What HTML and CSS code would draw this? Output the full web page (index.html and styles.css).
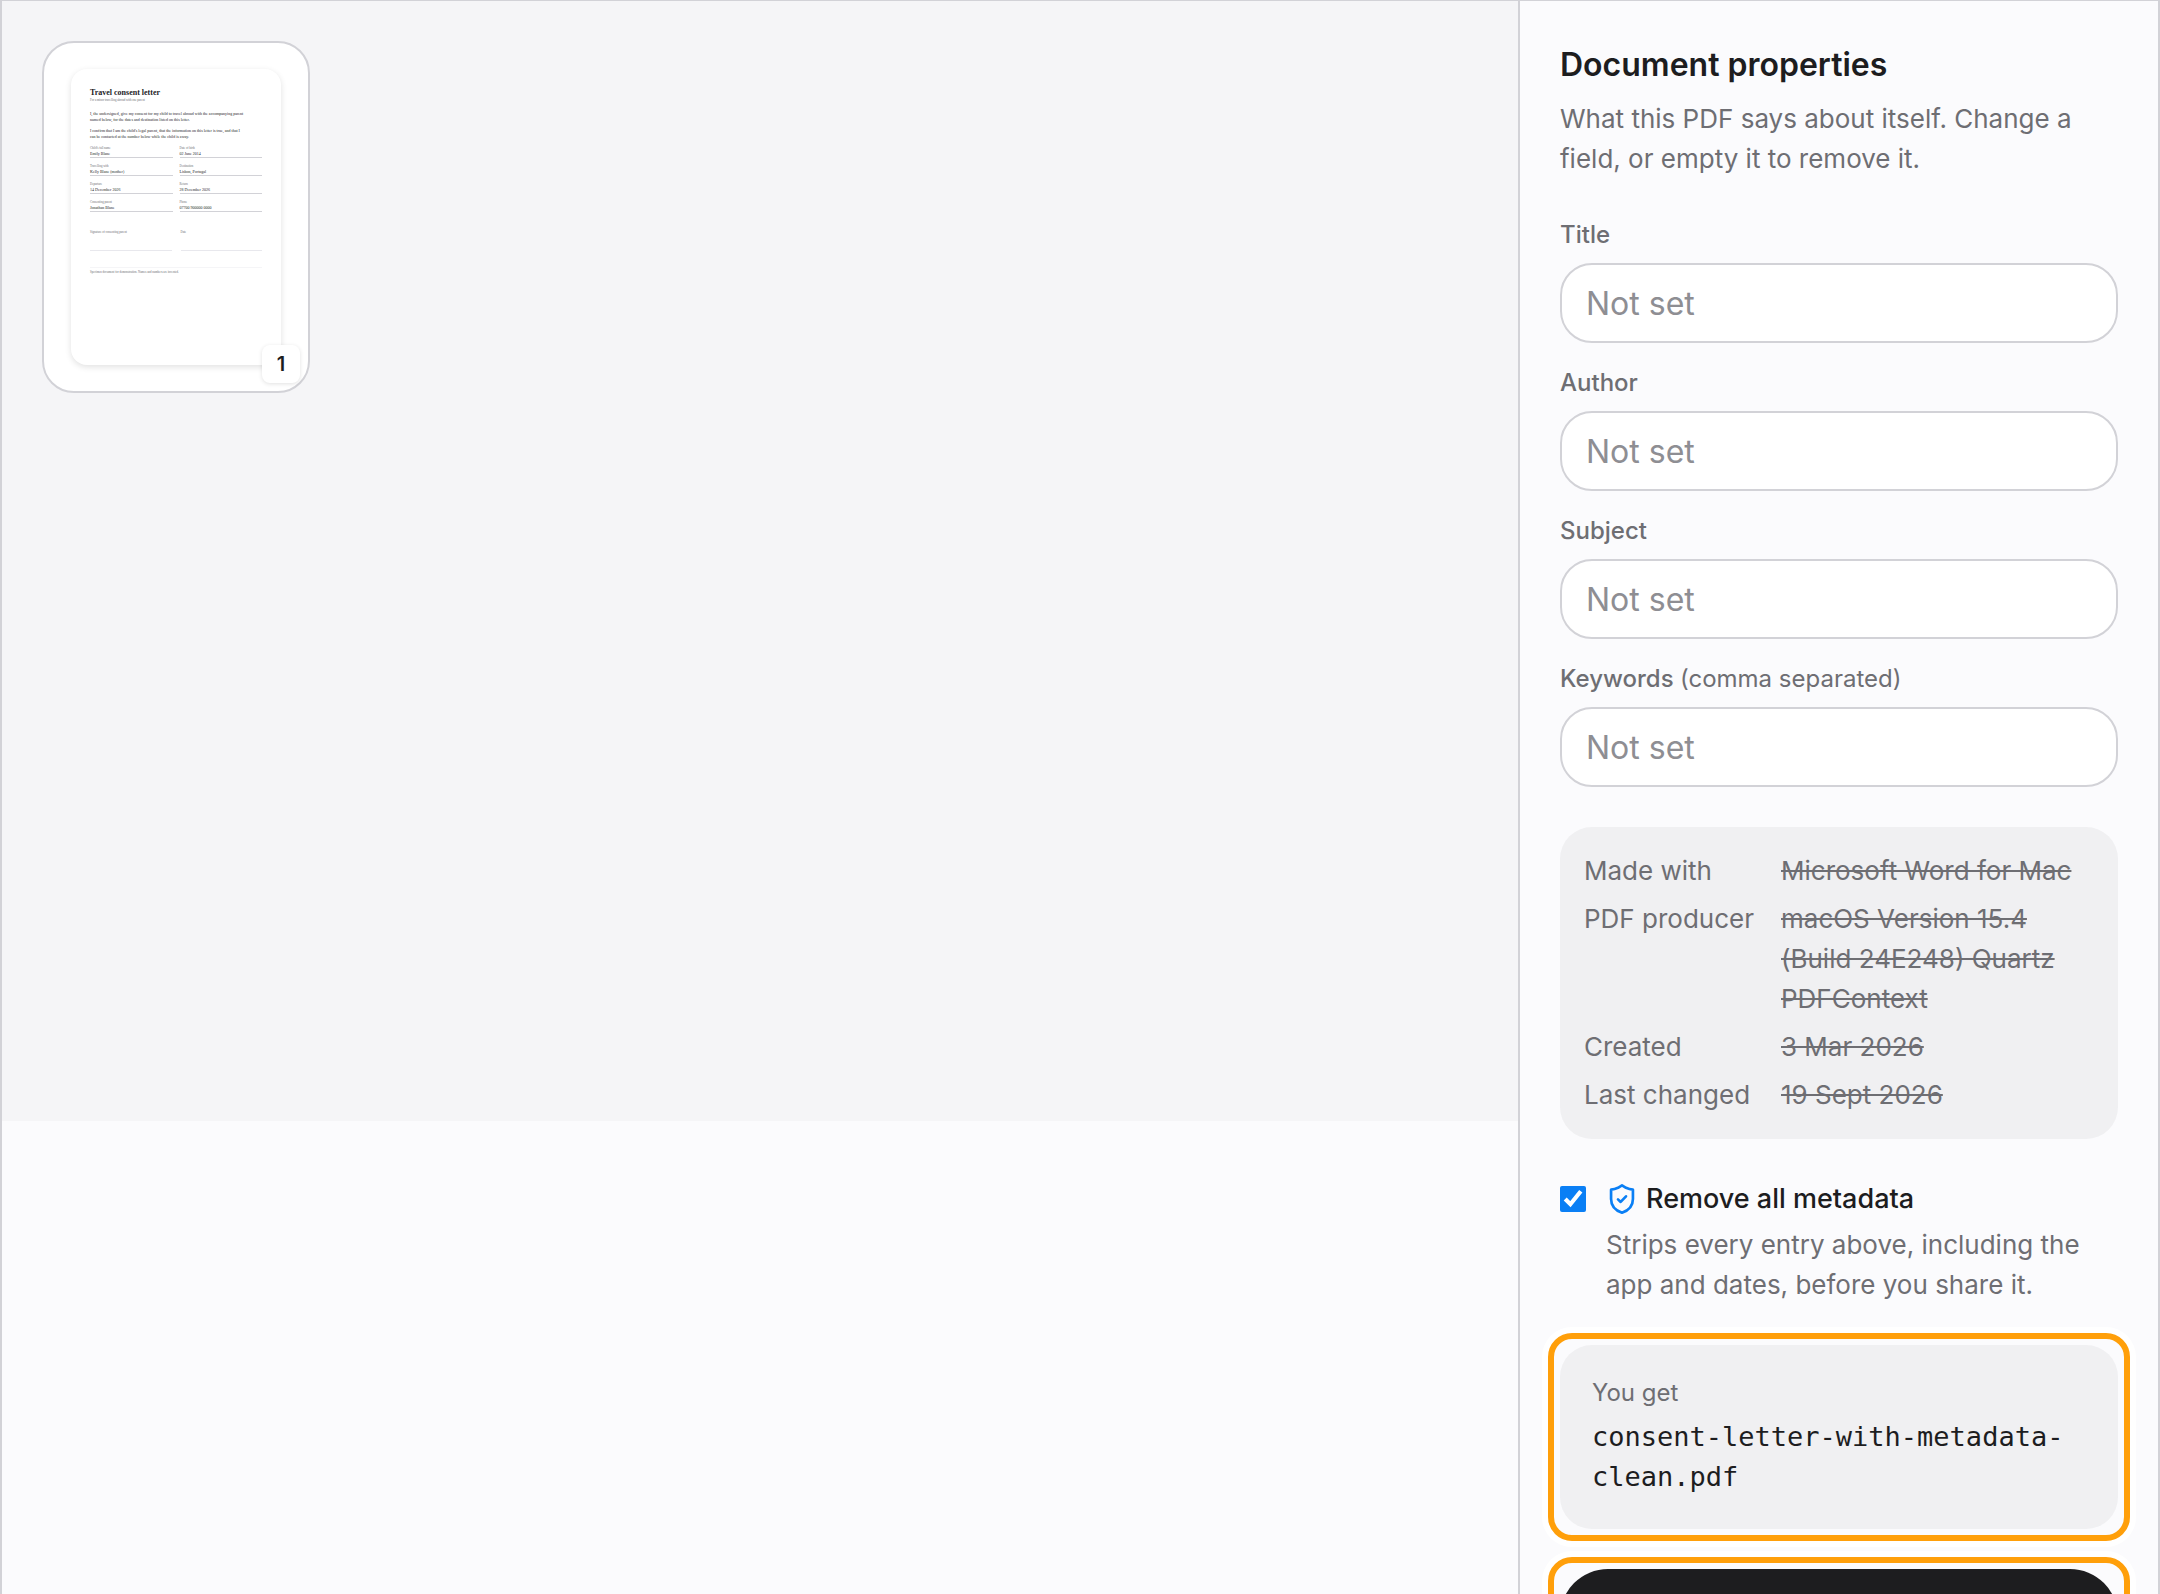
FILE: index.html
```html
<!DOCTYPE html>
<html lang="en">
<head>
    <meta charset="UTF-8">
    <meta name="viewport" content="width=device-width, initial-scale=1.0">
    <title>Document properties</title>
    <link rel="stylesheet" href="styles.css">
</head>
<body>
    <div class="editor">
        <main class="workspace">
            <div class="page-grid">
                <div class="page-card">
                    <div class="page-preview">
                        <h2>Travel consent letter</h2>
                        <p class="lead">For a minor travelling abroad with one parent</p>
                        <p class="letter">I, the undersigned, give my consent for my child to travel abroad with the accompanying parent<br>named below, for the dates and destination listed on this letter.</p>
                        <p class="letter">I confirm that I am the child's legal parent, that the information on this letter is true, and that I<br>can be contacted at the number below while the child is away.</p>
                        <dl class="details">
                            <div><dt>Child's full name</dt><dd>Emily Blane</dd></div>
                            <div><dt>Date of birth</dt><dd>02 June 2014</dd></div>
                            <div><dt>Travelling with</dt><dd>Kelly Blane (mother)</dd></div>
                            <div><dt>Destination</dt><dd>Lisbon, Portugal</dd></div>
                            <div><dt>Departure</dt><dd>14 December 2026</dd></div>
                            <div><dt>Return</dt><dd>28 December 2026</dd></div>
                            <div><dt>Consenting parent</dt><dd>Jonathan Blane</dd></div>
                            <div><dt>Phone</dt><dd>07700 900000 0000</dd></div>
                        </dl>
                        <div class="signature">
                            <span>Signature of consenting parent</span>
                            <span>Date</span>
                        </div>
                        <p class="note">Specimen document for demonstration. Names and numbers are invented.</p>
                    </div>
                    <span class="page-number">1</span>
                </div>
            </div>
        </main>

        <aside class="panel">
            <h1>Document properties</h1>
            <p class="hint">What this PDF says about itself. Change a field, or empty it to remove it.</p>

            <form class="fields">
                <div class="field">
                    <label for="title">Title</label>
                    <input type="text" id="title" placeholder="Not set">
                </div>
                <div class="field">
                    <label for="author">Author</label>
                    <input type="text" id="author" placeholder="Not set">
                </div>
                <div class="field">
                    <label for="subject">Subject</label>
                    <input type="text" id="subject" placeholder="Not set">
                </div>
                <div class="field">
                    <label for="keywords">Keywords <span>(comma separated)</span></label>
                    <input type="text" id="keywords" placeholder="Not set">
                </div>
            </form>

            <dl class="metadata">
                <dt>Made with</dt>
                <dd><del>Microsoft Word for Mac</del></dd>
                <dt>PDF producer</dt>
                <dd><del>macOS Version 15.4 (Build 24E248) Quartz PDFContext</del></dd>
                <dt>Created</dt>
                <dd><del>3 Mar 2026</del></dd>
                <dt>Last changed</dt>
                <dd><del>19 Sept 2026</del></dd>
            </dl>

            <div class="option">
                <input type="checkbox" id="remove" checked>
                <div class="option-text">
                    <label for="remove">
                        <svg class="shield" viewBox="0 0 24 24" fill="none" stroke="currentColor" stroke-width="2" stroke-linecap="round" stroke-linejoin="round">
                            <path d="M12 1.7 L15 3.6 Q17.5 4.800 20.200 5 V12 C20.200 17.200 17 20.600 12 22.300 C7 20.600 3.800 17.200 3.800 12 V5 Q6.500 4.800 9 3.600 Z"/>
                            <path d="M9 12.300 L11 14.200 L15 10"/>
                        </svg>
                        Remove all metadata
                    </label>
                    <p class="hint">Strips every entry above, including the app and dates, before you share it.</p>
                </div>
            </div>

            <div class="highlight">
                <div class="output">
                    <p class="output-label">You get</p>
                    <p class="filename">consent-letter-with-metadata-clean.pdf</p>
                </div>
            </div>

            <div class="highlight">
                <button type="button" class="save" aria-label="Save"></button>
            </div>
        </aside>
    </div>
</body>
</html>
```

FILE: styles.css
```css
* {
    box-sizing: border-box;
}

body {
    margin: 0;
    font-family: Inter, sans-serif;
    background-color: #fbfbfd;
    color: #1d1d1f;
}

h1, h2, p, dl, dd {
    margin: 0;
}

.editor {
    display: flex;
    height: 100vh;
    overflow: hidden;
    border: 2px solid #d2d2d7;
    border-top-width: 1px;
    border-bottom: none;
}

.workspace {
    flex: 1;
}

.page-grid {
    display: flex;
    align-items: flex-start;
    min-height: 1120px;
    padding: 40px;
    background-color: #f5f5f7;
}

.page-card {
    position: relative;
    padding: 26px 27px;
    border: 2px solid #d2d2d7;
    border-radius: 32px;
    background-color: #fff;
}

/* page thumbnail */
.page-preview {
    width: 210px;
    aspect-ratio: 210 / 296;
    padding: 18px 19px;
    border-radius: 16px;
    background-color: #fff;
    box-shadow: 0 2px 6px rgba(0, 0, 0, 0.12);
    font-family: "Liberation Serif", serif;
}

.page-preview h2 {
    font-size: 8px;
    line-height: 11px;
}

.lead {
    margin-bottom: 9px;
    font-size: 3px;
    line-height: 4px;
    color: #6e6e73;
}

.letter {
    margin-bottom: 5px;
    font-size: 4px;
    line-height: 6px;
    white-space: nowrap;
}

.details {
    display: grid;
    grid-template-columns: 1fr 1fr;
    gap: 5px 7px;
}

.details div {
    border-bottom: 1px solid #d2d2d7;
}

.details dt {
    font-size: 3px;
    line-height: 6px;
    color: #6e6e73;
}

.details dd {
    font-size: 4px;
    line-height: 6px;
}

.signature {
    display: grid;
    grid-template-columns: 1fr 1fr;
    gap: 9px;
    margin-top: 17px;
    font-size: 3px;
    line-height: 6px;
    color: #6e6e73;
}

.signature span {
    padding-bottom: 15px;
    border-bottom: 1px solid #e8e8ed;
}

.note {
    margin-top: 16px;
    border-top: 1px solid #f5f5f7;
    font-size: 3px;
    line-height: 8px;
    color: #6e6e73;
}

.page-number {
    position: absolute;
    right: 8px;
    bottom: 8px;
    width: 38px;
    border-radius: 8px;
    background-color: #fff;
    box-shadow: 0 1px 4px rgba(0, 0, 0, 0.12);
    font-size: 20px;
    font-weight: 600;
    line-height: 38px;
    text-align: center;
}

.panel {
    width: 640px;
    padding: 40px;
    border-left: 2px solid #d2d2d7;
}

h1 {
    margin-bottom: 10px;
    font-size: 32px;
    font-weight: 600;
    line-height: 48px;
}

.hint {
    font-size: 26px;
    line-height: 40px;
    color: #6e6e73;
}

.fields {
    display: grid;
    gap: 24px;
    margin-top: 40px;
}

.field label {
    display: block;
    margin-bottom: 12px;
    font-size: 24px;
    font-weight: 500;
    line-height: 32px;
    color: #6e6e73;
}

.field label span {
    font-weight: 400;
}

.field input {
    display: block;
    width: 100%;
    height: 80px;
    padding: 0 24px;
    border: 2px solid #d2d2d7;
    border-radius: 32px;
    background-color: #fff;
    font-family: inherit;
    font-size: 32px;
    color: #1d1d1f;
}

.field input::placeholder {
    color: #8e8e93;
}

.metadata {
    display: grid;
    grid-template-columns: 173px 1fr;
    gap: 8px 24px;
    margin-top: 40px;
    padding: 24px;
    border-radius: 32px;
    background-color: #f0f0f2;
    font-size: 26px;
    line-height: 40px;
    color: #6e6e73;
}

.option {
    display: flex;
    gap: 20px;
    margin-top: 40px;
}

.option input {
    flex: none;
    width: 26px;
    height: 26px;
    margin: 7px 0 0;
    accent-color: #0a7ff5;
}

.option label {
    display: flex;
    align-items: center;
    gap: 8px;
    margin-bottom: 6px;
    font-size: 27px;
    font-weight: 500;
    line-height: 40px;
}

.shield {
    width: 32px;
    height: 32px;
    color: #0a7ff5;
}

.highlight {
    position: relative;
    margin-top: 40px;
}

/* callout ring, sits outside the box it marks */
.highlight::after {
    content: "";
    position: absolute;
    inset: -12px;
    border: 6px solid #ff9f0a;
    border-radius: 24px;
    box-shadow: 0 0 0 6px #fff;
    pointer-events: none;
}

.output {
    padding: 32px;
    border-radius: 32px;
    background-color: #f0f0f2;
}

.output-label {
    margin-bottom: 8px;
    font-size: 24px;
    line-height: 32px;
    color: #6e6e73;
}

.filename {
    font-family: "DejaVu Sans Mono", monospace;
    font-size: 27px;
    line-height: 40px;
}

.save {
    display: block;
    width: 100%;
    height: 96px;
    border: none;
    border-radius: 48px;
    background-color: #1d1d1f;
    cursor: pointer;
}
```
